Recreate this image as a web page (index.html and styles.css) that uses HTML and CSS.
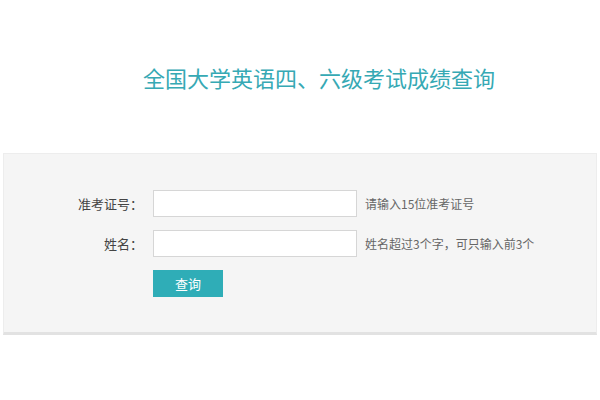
FILE: index.html
```html
<!DOCTYPE html>
<html lang="zh-CN">
<head>
  <meta charset="UTF-8" />
  <meta name="viewport" content="width=device-width, initial-scale=1.0" />
  <title>全国大学英语四、六级考试成绩查询</title>
  <link rel="stylesheet" href="styles.css">
</head>
<body>
  <header class="page-title">
    <h1>全国大学英语四、六级考试成绩查询</h1>
  </header>

  <div class="query-panel">
    <form class="query-form" onsubmit="return false;">
      <div class="form-row">
        <label class="form-label" for="zkzh">准考证号：</label>
        <input type="text" id="zkzh" class="form-input" maxlength="15">
        <span class="form-hint">请输入15位准考证号</span>
      </div>
      <div class="form-row">
        <label class="form-label" for="xm">姓名：</label>
        <input type="text" id="xm" class="form-input" maxlength="3">
        <span class="form-hint">姓名超过3个字，可只输入前3个</span>
      </div>
      <div class="form-row">
        <span class="form-label"></span>
        <button type="submit" class="btn-query">查询</button>
      </div>
    </form>
  </div>
</body>
</html>
```

FILE: styles.css
```css
body {
  margin: 0;
  background: #fff;
  font-family: "Noto Sans CJK SC", "Microsoft YaHei", sans-serif;
  color: #333;
}

.page-title {
  height: 153px;
  display: flex;
  align-items: center;
  justify-content: center;
}

.page-title h1 {
  margin: 0 0 0 38px;
  font-size: 22px;
  font-weight: normal;
  color: #36a9b4;
}

.query-panel {
  margin: 0 3px;
  background: #f5f5f5;
  border: 1px solid #ededed;
  border-bottom: 3px solid #e2e2e2;
  padding: 36px 0 35px;
}

.form-row {
  display: flex;
  align-items: center;
  margin-bottom: 13px;
}

.form-row:last-child {
  margin-bottom: 0;
}

.form-label {
  width: 139px;
  margin-right: 10px;
  text-align: right;
  font-size: 13px;
  color: #444;
}

.form-input {
  width: 204px;
  height: 27px;
  box-sizing: border-box;
  border: 1px solid #d6d6d6;
  background: #fff;
  padding: 0 6px;
  font-size: 13px;
  outline: none;
}

.form-hint {
  margin-left: 8px;
  font-size: 12px;
  color: #666;
}

.btn-query {
  width: 70px;
  height: 27px;
  border: none;
  background: #2fadb7;
  color: #fff;
  font-family: inherit;
  font-size: 13px;
  cursor: pointer;
}
```
